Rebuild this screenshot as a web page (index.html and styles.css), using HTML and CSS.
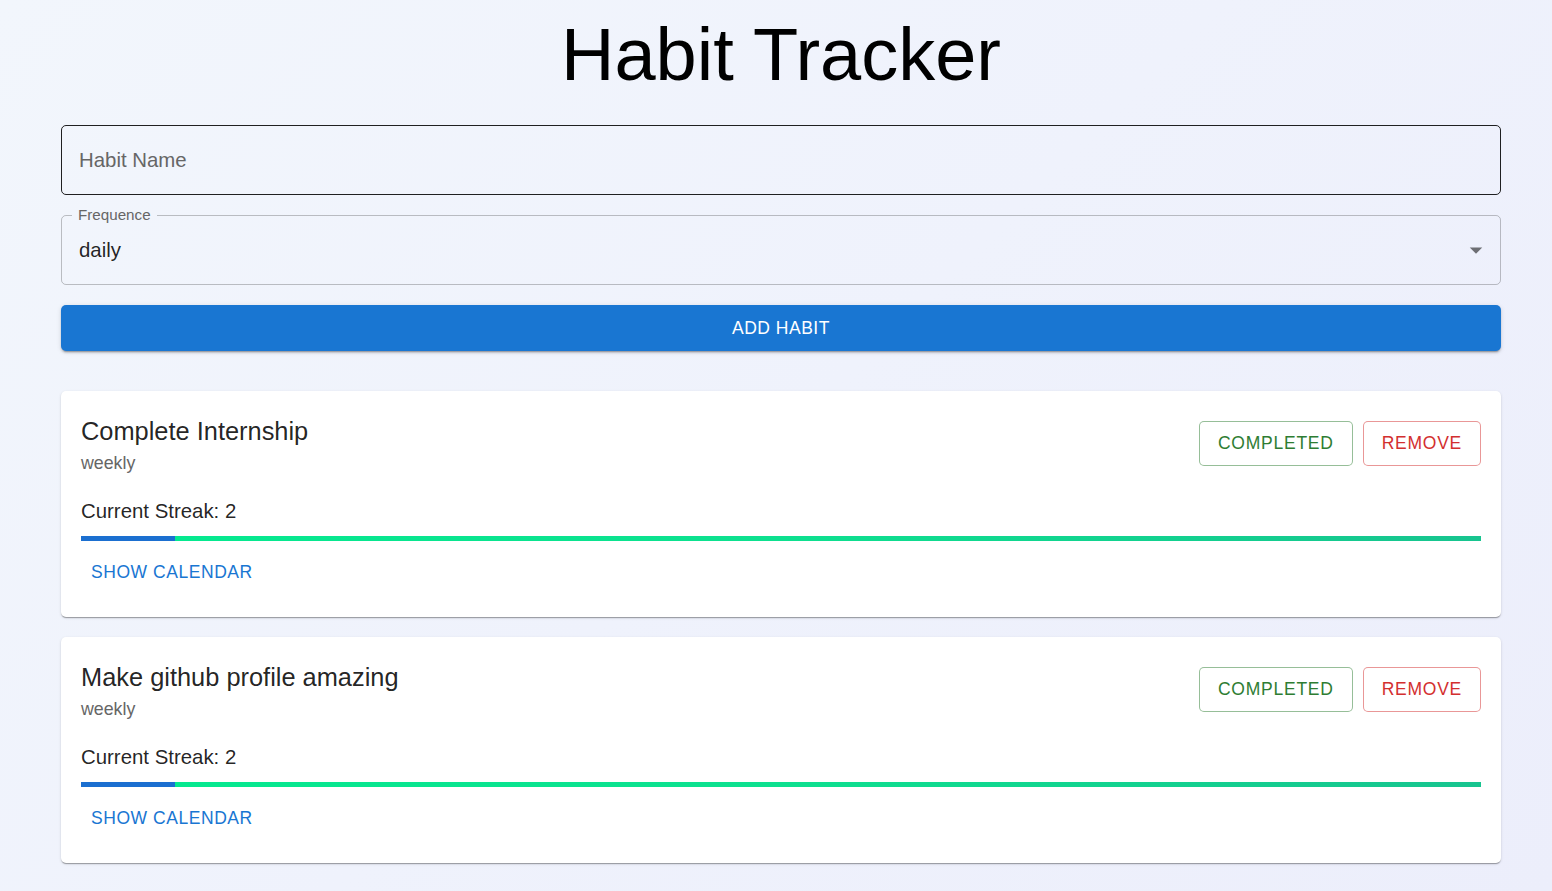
FILE: index.html
```html
<!DOCTYPE html>
<html lang="en">
<head>
<meta charset="utf-8">
<title>Habit Tracker</title>
<link rel="stylesheet" href="styles.css">
</head>
<body>
<main class="container">
  <h1 class="title">Habit Tracker</h1>
  <input class="name-input" type="text" placeholder="Habit Name">
  <fieldset class="select">
    <legend class="select-label">Frequence</legend>
    <div class="select-row">
      <span class="select-value">daily</span>
      <svg class="select-arrow" viewBox="0 0 24 24" width="30" height="30"><path d="M7 10l5 5 5-5z" fill="rgba(0,0,0,0.54)"/></svg>
    </div>
  </fieldset>
  <button class="add-btn">ADD HABIT</button>

  <section class="card">
    <div class="card-head">
      <div class="card-titles">
        <div class="habit-name">Complete Internship</div>
        <div class="habit-freq">weekly</div>
      </div>
      <div class="card-actions">
        <button class="out-btn green">COMPLETED</button>
        <button class="out-btn red">REMOVE</button>
      </div>
    </div>
    <div class="streak">Current Streak: 2</div>
    <div class="progress"><div class="progress-bar" style="width:6.7%"></div></div>
    <button class="text-btn">SHOW CALENDAR</button>
  </section>

  <section class="card">
    <div class="card-head">
      <div class="card-titles">
        <div class="habit-name">Make github profile amazing</div>
        <div class="habit-freq">weekly</div>
      </div>
      <div class="card-actions">
        <button class="out-btn green">COMPLETED</button>
        <button class="out-btn red">REMOVE</button>
      </div>
    </div>
    <div class="streak">Current Streak: 2</div>
    <div class="progress"><div class="progress-bar" style="width:6.7%"></div></div>
    <button class="text-btn">SHOW CALENDAR</button>
  </section>
</main>
</body>
</html>
```
FILE: styles.css
```css
* { box-sizing: border-box; }
html, body { height: 100%; }
body {
  margin: 0;
  font-family: "Liberation Sans", Arial, sans-serif;
  background: linear-gradient(135deg, #f2f6fc 0%, #eff2fc 50%, #eceefb 100%);
  color: rgba(0,0,0,0.87);
  overflow: hidden;
}
.container {
  width: 1440px;
  margin-left: 61px;
  display: flex;
  flex-direction: column;
}
.title {
  margin: 12px 0 0;
  font-size: 74px;
  font-weight: 400;
  line-height: 86px;
  text-align: center;
  color: #000;
}
.name-input {
  margin-top: 27px;
  height: 70px;
  width: 100%;
  border: 1px solid rgba(0,0,0,0.87);
  border-radius: 5px;
  background: transparent;
  padding: 0 17px;
  font-family: inherit;
  font-size: 20.4px;
  color: rgba(0,0,0,0.87);
  outline: none;
}
.name-input::placeholder { color: #666; }
.select {
  margin: 12px 0 0;
  padding: 0 16px 0 17px;
  border: 1px solid rgba(0,0,0,0.23);
  border-radius: 5px;
  min-width: 0;
}
.select-label {
  margin-left: -7px;
  padding: 0 6px;
  font-size: 15.2px;
  line-height: 16px;
  color: #666;
}
.select-row {
  display: flex;
  align-items: center;
  justify-content: space-between;
  height: 61px;
  padding-bottom: 7px;
}
.select-value {
  font-size: 20.4px;
  line-height: 24px;
  color: rgba(0,0,0,0.87);
}
.select-arrow { margin-right: -7px; }
.add-btn {
  margin-top: 20px;
  height: 46px;
  border: none;
  border-radius: 5px;
  background: #1976d2;
  color: #fff;
  font-family: inherit;
  font-size: 17.5px;
  font-weight: 500;
  letter-spacing: 0.5px;
  box-shadow: 0 3px 1px -2px rgba(0,0,0,0.2), 0 2px 2px 0 rgba(0,0,0,0.14), 0 1px 5px 0 rgba(0,0,0,0.12);
}
.card {
  margin-top: 40px;
  background: #fff;
  border-radius: 5px;
  padding: 20px 20px 22px;
  display: flex;
  flex-direction: column;
  align-items: flex-start;
  box-shadow: 0 2px 1px -1px rgba(0,0,0,0.2), 0 1px 1px 0 rgba(0,0,0,0.14), 0 1px 3px 0 rgba(0,0,0,0.12);
}
.card + .card { margin-top: 20px; }
.card-head {
  width: 100%;
  display: flex;
  align-items: center;
  justify-content: space-between;
}
.habit-name {
  font-size: 25.4px;
  line-height: 40px;
  color: rgba(0,0,0,0.87);
}
.habit-freq {
  font-size: 17.8px;
  line-height: 25px;
  color: #666;
}
.card-actions { display: flex; gap: 10px; }
.out-btn {
  height: 45px;
  padding: 0 18px;
  background: #fff;
  border-radius: 5px;
  font-family: inherit;
  font-size: 17.5px;
  letter-spacing: 0.75px;
}
.out-btn.green { color: #2e7d32; border: 1px solid rgba(46,125,50,0.5); }
.out-btn.red { color: #d32f2f; border: 1px solid rgba(211,47,47,0.5); }
.streak {
  margin-top: 20px;
  font-size: 20.4px;
  line-height: 30px;
}
.progress {
  margin-top: 10px;
  width: 100%;
  height: 5px;
  background: linear-gradient(90deg, #04ea8f 0%, #0de08f 50%, #17c48f 100%);
}
.progress-bar { height: 100%; background: #1b6fd0; }
.text-btn {
  margin-top: 8px;
  height: 46px;
  padding: 0 10px;
  border: none;
  background: transparent;
  color: #1976d2;
  font-family: inherit;
  font-size: 17.5px;
  letter-spacing: 0.55px;
}
```
